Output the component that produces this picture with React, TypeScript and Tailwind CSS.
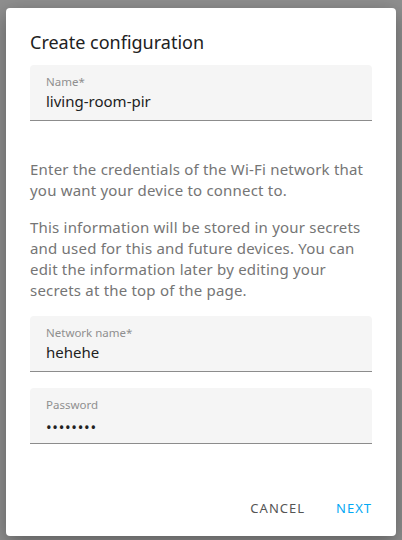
function Field({ label, value, password }: { label: string; value: string; password?: boolean }) {
  return (
    <div className="flex h-[56px] flex-col rounded-t bg-[#f5f5f5] px-4 pt-[9px] border-b border-[#8c8c8c]">
      <span className="text-[11.5px] leading-[16px] text-[#8f8f8f]">{label}</span>
      {password ? (
        <span className="mt-[4px] text-[15px] leading-[20px] tracking-[0.7px] text-[#212121]">{value}</span>
      ) : (
        <span className="text-[15px] leading-[22px] text-[#212121]">{value}</span>
      )}
    </div>
  )
}

export default function App() {
  return (
    <div
      className="flex h-[540px] w-[402px] items-start bg-[#8f8f8f] pl-[6px] pt-[8px]"
      style={{ fontFamily: '"Noto Sans", "Open Sans", sans-serif' }}
    >
      <div className="flex h-[528px] w-[390px] flex-col rounded-[4px] bg-white px-6 shadow-[0_6px_20px_rgba(0,0,0,0.35)]">
        {/* 标题 */}
        <h2 className="pt-[21px] pb-[10px] text-[18px] leading-[26px] text-[#212121]">Create configuration</h2>

        <Field label="Name*" value="living-room-pir" />

        <div className="mt-[38px] text-[15px] leading-[21px] tracking-[0.2px] text-[#757575]">
          <p>Enter the credentials of the Wi-Fi network that you want your device to connect to.</p>
          <p className="mt-[16px]">
            This information will be stored in your secrets and used for this and future devices. You can edit the
            information later by editing your secrets at the top of the page.
          </p>
        </div>

        <div className="mt-[15px] flex flex-col gap-4">
          <Field label="Network name*" value="hehehe" />
          <Field label="Password" value="••••••••" password />
        </div>

        <div className="mt-auto flex justify-end gap-[31px] pb-[18px]">
          <button className="text-[13px] tracking-[1px] text-[#555]">CANCEL</button>
          <button className="text-[13px] tracking-[1px] text-[#03a9f4]">NEXT</button>
        </div>
      </div>
    </div>
  )
}
